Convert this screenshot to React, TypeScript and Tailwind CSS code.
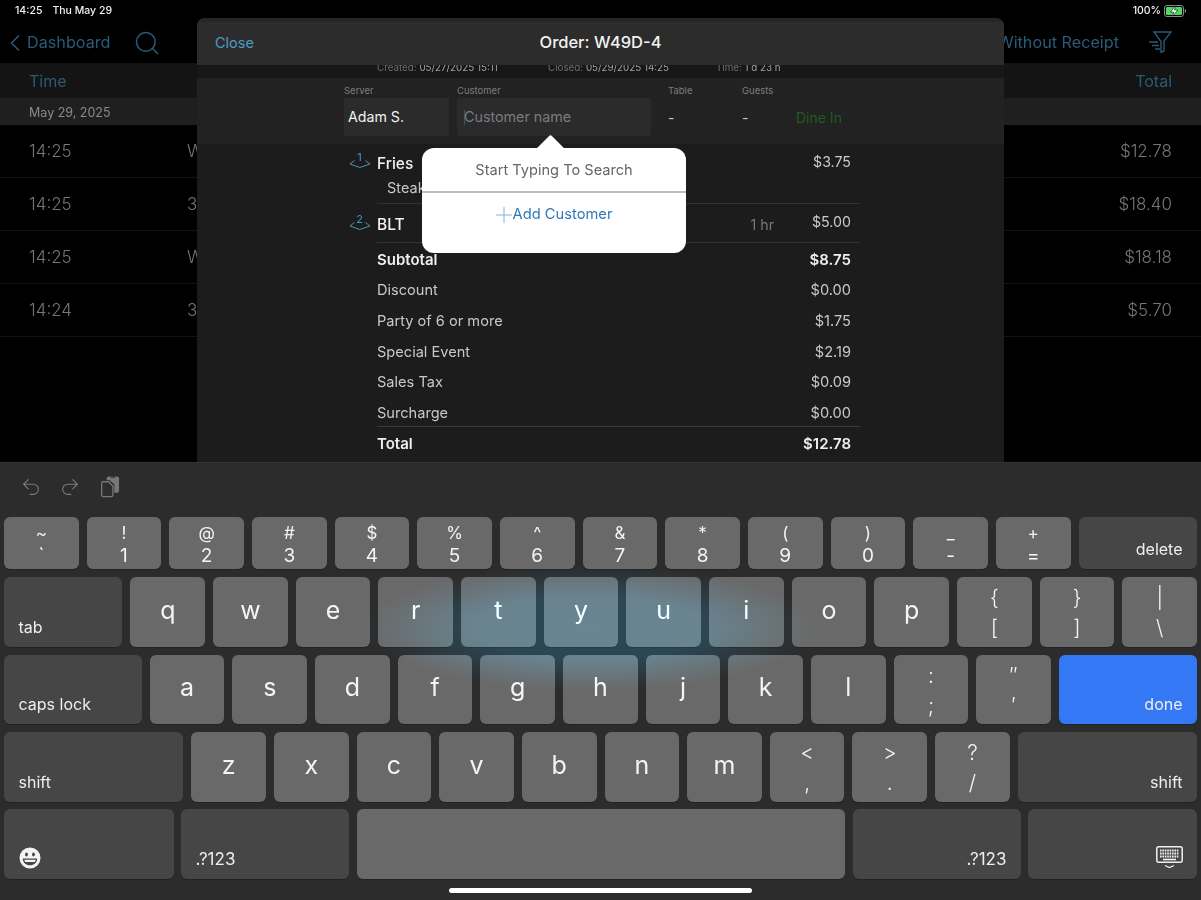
import { ChevronLeft, Redo2, Search, Undo2 } from "lucide-react";

type KeyDef = { top?: string; label: string };

const numberRow: KeyDef[] = [
  { top: "~", label: "`" },
  { top: "!", label: "1" },
  { top: "@", label: "2" },
  { top: "#", label: "3" },
  { top: "$", label: "4" },
  { top: "%", label: "5" },
  { top: "^", label: "6" },
  { top: "&", label: "7" },
  { top: "*", label: "8" },
  { top: "(", label: "9" },
  { top: ")", label: "0" },
  { top: "_", label: "-" },
  { top: "+", label: "=" },
];

const letters = (s: string): KeyDef[] => s.split("").map((label) => ({ label }));

const orders = [
  { time: "14:25", id: "W", total: "$12.78" },
  { time: "14:25", id: "3", total: "$18.40" },
  { time: "14:25", id: "W", total: "$18.18" },
  { time: "14:24", id: "3", total: "$5.70" },
];

const summary = [
  { label: "Discount", value: "$0.00" },
  { label: "Party of 6 or more", value: "$1.75" },
  { label: "Special Event", value: "$2.19" },
  { label: "Sales Tax", value: "$0.09" },
  { label: "Surcharge", value: "$0.00" },
];

const Key = ({ k, tall }: { k: KeyDef; tall?: boolean }) => (
  <div className="w-[74.67px] shrink-0 rounded-[6px] bg-[#696969] shadow-[0_1px_0_#222] flex flex-col items-center justify-center text-[#f4f4f4]">
    {k.top ? (
      tall ? (
        <div className="pt-[2px] flex flex-col items-center">
          <span className="text-[21px] font-light leading-[30px]">{k.top}</span>
          <span className="text-[21px] font-light leading-[30px]">{k.label}</span>
        </div>
      ) : (
        <div className="pt-[2px] flex flex-col items-center">
          <span className="text-[17px] leading-[22px]">{k.top}</span>
          <span className="text-[19px] leading-[23px]">{k.label}</span>
        </div>
      )
    ) : (
      <span className="text-[25px] leading-none pb-[4px]">{k.label}</span>
    )}
  </div>
);

const ActionKey = ({
  label,
  right,
  children,
  className = "flex-1",
}: {
  label?: string;
  right?: boolean;
  children?: React.ReactNode;
  className?: string;
}) => (
  <div
    className={`${className} rounded-[6px] bg-[#464646] shadow-[0_1px_0_#222] flex items-end px-[14.5px] pb-[10px] text-[16px] leading-[20px] text-[#eeeeee] ${
      right ? "justify-end" : "justify-start"
    }`}
  >
    {label}
    {children}
  </div>
);

const SeatIcon = ({ n }: { n: number }) => (
  <svg width="22" height="18" viewBox="0 0 22 18" fill="none" className="shrink-0 overflow-visible">
    <text x="10.500" y="8" textAnchor="middle" fontSize="11" fill="#4a93bd" fontFamily="Inter, sans-serif">
      {n}
    </text>
    <path d="M5.500 7.500 1 11l9.800 3.500L21 11l-4.500-3.500" stroke="#4a93bd" strokeWidth="1" />
  </svg>
);

const FilterIcon = () => (
  <svg width="24" height="22" viewBox="0 0 24 22" fill="none" stroke="#2b5a78" strokeWidth="1.400">
    <path d="M6 1h17l-7 9v10l-3 1.500V10.500L6 1Z" />
    <path d="M1 11h9M4 14.500h7M7 18h5" />
  </svg>
);

const PasteIcon = () => (
  <svg width="19" height="22" viewBox="0 0 20 23" fill="#777777">
    <path d="M6 2.500C6 1.400 6.900.5 8 .5h9c1.100 0 2 .9 2 2v13c0 1.100-.9 2-2 2h-3V8.500l-5-4H6v-2Z" />
    <path d="M10 .2h5v1.600h-5z" fill="#333333" />
    <path
      d="M2 6h6l4.500 4.500V20a1.700 1.700 0 0 1-1.700 1.700H2A1.700 1.700 0 0 1 .7 20V7.500C.7 6.700 1.200 6 2 6Z"
      fill="#2e2e2e"
      stroke="#777777"
      strokeWidth="1.400"
    />
  </svg>
);

const EmojiIcon = () => (
  <svg width="22" height="22" viewBox="0 0 22 22">
    <circle cx="11" cy="11" r="10.500" fill="#f4f4f4" />
    <ellipse cx="7.500" cy="7.500" rx="1.400" ry="2" fill="#464646" />
    <ellipse cx="14.500" cy="7.500" rx="1.400" ry="2" fill="#464646" />
    <path d="M3.800 11.500h14.400c0 4-3.200 6.800-7.200 6.800s-7.200-2.800-7.200-6.800Z" fill="#464646" />
    <path d="M5.300 12.700h11.400c-.2 1-.5 1.600-1 2.200H6.300c-.5-.6-.8-1.200-1-2.200Z" fill="#f4f4f4" />
  </svg>
);

const KeyboardIcon = () => (
  <svg width="27" height="23" viewBox="0 0 27 23" fill="none">
    <rect x=".8" y=".8" width="25.400" height="15.400" rx="2" stroke="#f0f0f0" strokeWidth="1.500" />
    <path
      d="M4 4.500h19M4 7.500h19M4 10.500h19"
      stroke="#f0f0f0"
      strokeWidth="1.800"
      strokeDasharray="1.600 .8"
    />
    <path d="M7 13.500h13" stroke="#f0f0f0" strokeWidth="1.600" />
    <path d="M9 19.500l4.500 2 4.500-2" stroke="#f0f0f0" strokeWidth="1.300" />
  </svg>
);

const BatteryIcon = () => (
  <svg width="23" height="12" viewBox="0 0 23 12" fill="none">
    <rect x=".5" y=".5" width="19" height="11" rx="2.500" stroke="#8a8a8a" />
    <rect x="2" y="2" width="16" height="8" rx="1.200" fill="#4cd964" />
    <path d="M20.800 4v4c.8-.2 1.400-1 1.400-2s-.6-1.800-1.400-2Z" fill="#8a8a8a" />
    <path d="M11.500 .8 6.500 7h3.200L8.500 11.200 13.800 5h-3.300l1-4.200Z" fill="#ffffff" stroke="#111" strokeWidth=".6" />
  </svg>
);

const OrderModal = () => (
  <div className="absolute left-[197px] top-[18px] w-[807px] h-[444px] rounded-t-[8px] overflow-hidden bg-[#1c1c1c] flex flex-col">
    <div className="h-[47px] shrink-0 bg-[#2c2c2c] border-t-[4px] border-[#262626] relative flex items-center justify-center pb-[2px]">
      <span className="absolute left-[18px] top-[10px] text-[14.5px] text-[#4a9bcb]">Close</span>
      <span className="text-[16.5px] font-medium text-[#f2f2f2]">Order: W49D-4</span>
    </div>
    <div className="h-[13px] shrink-0 bg-[#171717] overflow-hidden pl-[180px] flex text-[9.800px] leading-[5px] text-[#6f6f6f]">
      <span className="w-[171px] whitespace-nowrap">
        Created: <span className="text-[#a0a0a0]">05/27/2025 15:11</span>
      </span>
      <span className="w-[168px] whitespace-nowrap">
        Closed: <span className="text-[#a0a0a0]">05/29/2025 14:25</span>
      </span>
      <span className="whitespace-nowrap">
        Time: <span className="text-[#a0a0a0]">1 d 23 h</span>
      </span>
    </div>
    <div className="h-[66px] shrink-0 bg-[#222222] pl-[147px] pt-[7px] flex">
      <div className="w-[113px]">
        <div className="text-[9.500px] leading-[12px] text-[#7d7d7d]">Server</div>
        <div className="w-[105px] h-[38px] mt-[1px] bg-[#2b2b2b] flex items-center pl-[4px] text-[14.200px] text-[#f2f2f2]">
          Adam S.
        </div>
      </div>
      <div className="w-[211px]">
        <div className="text-[9.500px] leading-[12px] text-[#7d7d7d]">Customer</div>
        <div className="w-[194px] h-[38px] mt-[1px] bg-[#2b2b2b] rounded-[3px] flex items-center pl-[7px] text-[14.300px] text-[#777d80]">
          <span className="w-[1px] h-[15px] bg-[#44525a] mr-[-1px]" />
          Customer name
        </div>
      </div>
      <div className="w-[74px]">
        <div className="text-[9.500px] leading-[12px] text-[#7d7d7d]">Table</div>
        <div className="h-[38px] mt-[1px] flex items-center text-[14px] text-[#c8c8c8]">-</div>
      </div>
      <div className="w-[54px]">
        <div className="text-[9.500px] leading-[12px] text-[#7d7d7d]">Guests</div>
        <div className="h-[38px] mt-[1px] flex items-center text-[14px] text-[#c8c8c8]">-</div>
      </div>
      <div className="pt-[13px]">
        <div className="h-[38px] flex items-center text-[14px] text-[#1f5c1f]">Dine In</div>
      </div>
    </div>

    <div className="pl-[151px] pr-[144px] pt-[7px] flex flex-col">
      <div className="h-[53px] flex ml-[1px]">
        <div className="w-[28px] pt-[2px]">
          <SeatIcon n={1} />
        </div>
        <div className="flex-1 border-b border-[#333333] pr-[9px] relative">
          <div className="flex justify-between items-start">
            <span className="text-[15.500px] font-medium text-[#f2f2f2] pt-[1px]">Fries</span>
            <span className="text-[14.200px] text-[#cccccc]">$3.75</span>
          </div>
          <div className="pl-[10px] pt-[2px] text-[14.500px] text-[#c8c8c8]">Steak</div>
        </div>
      </div>
      <div className="h-[39px] flex items-center ml-[1px]">
        <div className="w-[28px]">
          <SeatIcon n={2} />
        </div>
        <div className="flex-1 h-full border-b border-[#333333] pr-[9px] pt-[3px] flex items-center justify-between">
          <span className="text-[15.500px] font-medium text-[#f2f2f2]">BLT</span>
          <span className="text-[14.200px] text-[#cccccc] flex items-center gap-[38px]">
            <span className="text-[#777777]">1 hr</span>
            <span className="pb-[5px]">$5.00</span>
          </span>
        </div>
      </div>
      <div className="ml-[29px] pr-[9px] flex flex-col">
        <div className="h-[33px] pt-[1px] flex items-center justify-between text-[15px] font-semibold text-[#eeeeee]">
          <span>Subtotal</span>
          <span>$8.75</span>
        </div>
        {summary.map((row) => (
          <div key={row.label} className="h-[30.700px] flex items-center justify-between text-[14.600px] text-[#c8c8c8]">
            <span>{row.label}</span>
            <span>{row.value}</span>
          </div>
        ))}
      </div>
      <div className="ml-[29px] mt-[-3px] border-t border-[#3a3a3a] pr-[9px] h-[35px] flex items-center justify-between text-[15px] font-semibold text-[#eeeeee]">
        <span>Total</span>
        <span>$12.78</span>
      </div>
    </div>
  </div>
);

const CustomerPopover = () => (
  <div className="absolute left-[422px] top-[148px] w-[264px] h-[105px] rounded-[12px] bg-white">
    <div className="absolute left-[118px] top-[-9px] w-[21px] h-[21px] rotate-45 rounded-[2px] bg-white" />
    <div className="relative h-[45px] pt-[3px] flex items-center justify-center border-b-[2px] border-[#bdbdbd] text-[14.600px] text-[#666666]">
      Start Typing To Search
    </div>
    <div className="relative h-[43px] flex items-center justify-center text-[14.700px] text-[#2e78b7]">
      <svg width="16" height="16" viewBox="0 0 16 16" className="shrink-0 mr-[1px]">
        <path d="M8 0v16M0 8h16" stroke="#7db8dc" strokeWidth="1" />
      </svg>
      Add Customer
    </div>
  </div>
);

const Keyboard = () => (
  <div className="relative h-[438px] shrink-0 bg-[#2c2c2c] border-t border-[#333333]">
    <div className="h-[54px] flex items-center pl-[20px] pb-[6px] text-[#7a7a7a]">
      <Undo2 size={22} strokeWidth={1.200} />
      <Redo2 size={22} strokeWidth={1.200} className="ml-[17px]" />
      <div className="ml-[20px]">
        <PasteIcon />
      </div>
    </div>
    <div className="px-[4px] flex flex-col">
      <div className="flex gap-[8px] h-[52px]">
        {numberRow.map((k) => (
          <Key key={k.label} k={k} />
        ))}
        <ActionKey label="delete" right />
      </div>
      <div className="flex gap-[8px] h-[70px] mt-[8px]">
        <ActionKey label="tab" />
        {letters("qwertyuiop").map((k) => (
          <Key key={k.label} k={k} />
        ))}
        <Key tall k={{ top: "{", label: "[" }} />
        <Key tall k={{ top: "}", label: "]" }} />
        <Key tall k={{ top: "|", label: "\\" }} />
      </div>
      <div className="flex gap-[8px] h-[69px] mt-[8px]">
        <ActionKey label="caps lock" />
        {letters("asdfghjkl").map((k) => (
          <Key key={k.label} k={k} />
        ))}
        <Key tall k={{ top: ":", label: ";" }} />
        <Key tall k={{ top: "″", label: "′" }} />
        <ActionKey label="done" right className="w-[138px] shrink-0 !bg-[#3478f6]" />
      </div>
      <div className="flex gap-[8px] h-[70px] mt-[8px]">
        <ActionKey label="shift" />
        {letters("zxcvbnm").map((k) => (
          <Key key={k.label} k={k} />
        ))}
        <Key tall k={{ top: "<", label: "," }} />
        <Key tall k={{ top: ">", label: "." }} />
        <Key tall k={{ top: "?", label: "/" }} />
        <ActionKey label="shift" right />
      </div>
      <div className="flex gap-[7px] h-[70px] mt-[7px]">
        <ActionKey className="w-[170px] shrink-0">
          <EmojiIcon />
        </ActionKey>
        <ActionKey label=".?123" className="w-[168px] shrink-0 text-[17px]" />
        <div className="flex-1 mx-[1px] rounded-[6px] bg-[#696969] shadow-[0_1px_0_#222]" />
        <ActionKey label=".?123" right className="w-[168px] shrink-0 text-[17px]" />
        <ActionKey right className="w-[169px] shrink-0">
          <KeyboardIcon />
        </ActionKey>
      </div>
    </div>
    <div className="absolute left-[449px] top-[425px] w-[303px] h-[5px] rounded-full bg-white" />
    <div className="absolute left-[355px] top-[100px] w-[470px] h-[130px] pointer-events-none mix-blend-plus-lighter bg-[radial-gradient(ellipse_at_center,#001c28_0%,#001a26_35%,transparent_68%)]" />
  </div>
);

export default function App() {
  return (
    <div className="relative w-[1201px] h-[900px] overflow-hidden bg-black flex flex-col font-['Inter',sans-serif]">
      <div className="h-[462px] shrink-0 flex flex-col">
        <div className="h-[21px] flex items-center justify-between pl-[15px] pr-[14px] text-[10.500px] font-medium text-[#f2f2f2]">
          <div className="flex gap-[10px]">
            <span>14:25</span>
            <span>Thu May 29</span>
          </div>
          <div className="flex items-center gap-[3px]">
            <span>100%</span>
            <BatteryIcon />
          </div>
        </div>
        <div className="h-[42px] pt-[1px] flex items-center justify-between pl-[1px] pr-[29px] text-[#2b5a78]">
          <div className="flex items-center">
            <ChevronLeft size={28} strokeWidth={1.300} />
            <span className="text-[16.200px] ml-[-2px]">Dashboard</span>
            <Search size={28} strokeWidth={1.300} className="ml-[22px]" />
          </div>
          <div className="flex items-center">
            <span className="text-[16.200px]">Without Receipt</span>
            <div className="ml-[29px]">
              <FilterIcon />
            </div>
          </div>
        </div>
        <div className="h-[35px] pt-[1px] bg-[#141414] flex items-center justify-between pl-[29px] pr-[29px] text-[16px] text-[#2b5a78]">
          <span>Time</span>
          <span>Total</span>
        </div>
        <div className="h-[27px] pt-[4px] bg-[#1f1f1f] flex items-center pl-[29px] text-[12.500px] text-[#8a8a8a]">
          May 29, 2025
        </div>
        {orders.map((order, i) => (
          <div
            key={i}
            className="h-[53px] pt-[2px] border-b border-[#141414] flex items-center justify-between pl-[29px] pr-[29px] text-[17px] font-light text-[#767676]"
          >
            <span className="w-[158px]">{order.time}</span>
            <span className="flex-1">{order.id}</span>
            <span>{order.total}</span>
          </div>
        ))}
      </div>
      <Keyboard />
      <OrderModal />
      <CustomerPopover />
    </div>
  );
}
